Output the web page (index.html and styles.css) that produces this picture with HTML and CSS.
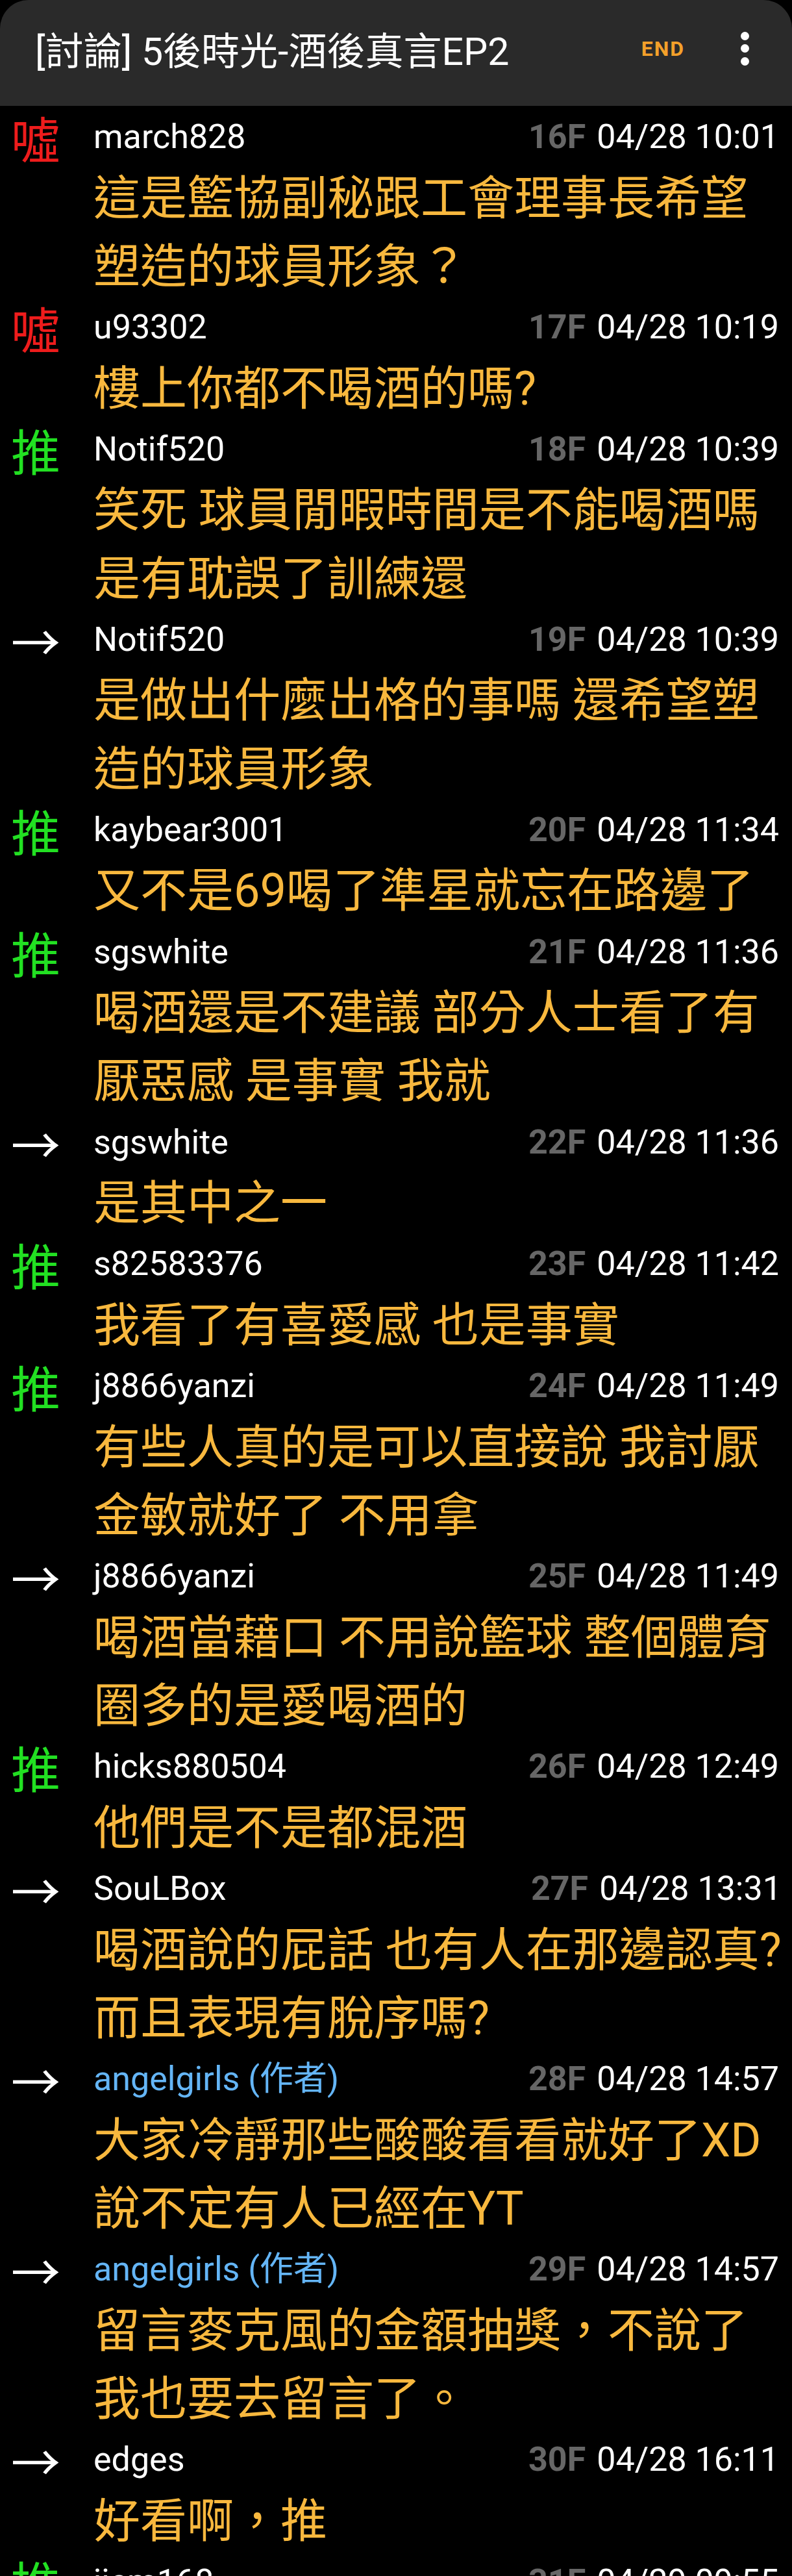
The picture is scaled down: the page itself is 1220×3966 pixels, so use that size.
FILE: index.html
```html
<!DOCTYPE html>
<html lang="zh-Hant">
<head>
<meta charset="utf-8">
<title>[討論] 5後時光-酒後真言EP2</title>
<link rel="stylesheet" href="styles.css">
</head>
<body>
<div class="screen">
  <header class="appbar">
    <div class="title">[討論] 5後時光-酒後真言EP2</div>
    <div class="end">END</div>
    <div class="more" aria-label="more">
      <span class="dot"></span><span class="dot"></span><span class="dot"></span>
    </div>
  </header>

  <main class="list">
    <div class="row">
      <div class="tag boo">噓</div>
      <div class="body">
        <div class="meta"><span class="user">march828</span><span class="floor">16F</span><span class="date">04/28 10:01</span></div>
        <div class="content">這是籃協副秘跟工會理事長希望<br>塑造的球員形象？</div>
      </div>
    </div>
    <div class="row">
      <div class="tag boo">噓</div>
      <div class="body">
        <div class="meta"><span class="user">u93302</span><span class="floor">17F</span><span class="date">04/28 10:19</span></div>
        <div class="content">樓上你都不喝酒的嗎?</div>
      </div>
    </div>
    <div class="row">
      <div class="tag push">推</div>
      <div class="body">
        <div class="meta"><span class="user">Notif520</span><span class="floor">18F</span><span class="date">04/28 10:39</span></div>
        <div class="content">笑死 球員閒暇時間是不能喝酒嗎<br>是有耽誤了訓練還</div>
      </div>
    </div>
    <div class="row">
      <div class="tag arrow">→</div>
      <div class="body">
        <div class="meta"><span class="user">Notif520</span><span class="floor">19F</span><span class="date">04/28 10:39</span></div>
        <div class="content">是做出什麼出格的事嗎 還希望塑<br>造的球員形象</div>
      </div>
    </div>
    <div class="row">
      <div class="tag push">推</div>
      <div class="body">
        <div class="meta"><span class="user">kaybear3001</span><span class="floor">20F</span><span class="date">04/28 11:34</span></div>
        <div class="content">又不是69喝了準星就忘在路邊了</div>
      </div>
    </div>
    <div class="row">
      <div class="tag push">推</div>
      <div class="body">
        <div class="meta"><span class="user">sgswhite</span><span class="floor">21F</span><span class="date">04/28 11:36</span></div>
        <div class="content">喝酒還是不建議 部分人士看了有<br>厭惡感 是事實 我就</div>
      </div>
    </div>
    <div class="row">
      <div class="tag arrow">→</div>
      <div class="body">
        <div class="meta"><span class="user">sgswhite</span><span class="floor">22F</span><span class="date">04/28 11:36</span></div>
        <div class="content">是其中之一</div>
      </div>
    </div>
    <div class="row">
      <div class="tag push">推</div>
      <div class="body">
        <div class="meta"><span class="user">s82583376</span><span class="floor">23F</span><span class="date">04/28 11:42</span></div>
        <div class="content">我看了有喜愛感 也是事實</div>
      </div>
    </div>
    <div class="row">
      <div class="tag push">推</div>
      <div class="body">
        <div class="meta"><span class="user">j8866yanzi</span><span class="floor">24F</span><span class="date">04/28 11:49</span></div>
        <div class="content">有些人真的是可以直接說 我討厭<br>金敏就好了 不用拿</div>
      </div>
    </div>
    <div class="row">
      <div class="tag arrow">→</div>
      <div class="body">
        <div class="meta"><span class="user">j8866yanzi</span><span class="floor">25F</span><span class="date">04/28 11:49</span></div>
        <div class="content">喝酒當藉口 不用說籃球 整個體育<br>圈多的是愛喝酒的</div>
      </div>
    </div>
    <div class="row">
      <div class="tag push">推</div>
      <div class="body">
        <div class="meta"><span class="user">hicks880504</span><span class="floor">26F</span><span class="date">04/28 12:49</span></div>
        <div class="content">他們是不是都混酒</div>
      </div>
    </div>
    <div class="row">
      <div class="tag arrow">→</div>
      <div class="body">
        <div class="meta"><span class="user">SouLBox</span><span class="floor">27F</span><span class="date">04/28 13:31</span></div>
        <div class="content">喝酒說的屁話 也有人在那邊認真?<br>而且表現有脫序嗎?</div>
      </div>
    </div>
    <div class="row">
      <div class="tag arrow">→</div>
      <div class="body">
        <div class="meta"><span class="user author">angelgirls (作者)</span><span class="floor">28F</span><span class="date">04/28 14:57</span></div>
        <div class="content">大家冷靜那些酸酸看看就好了XD<br>說不定有人已經在YT</div>
      </div>
    </div>
    <div class="row">
      <div class="tag arrow">→</div>
      <div class="body">
        <div class="meta"><span class="user author">angelgirls (作者)</span><span class="floor">29F</span><span class="date">04/28 14:57</span></div>
        <div class="content">留言麥克風的金額抽獎，不說了<br>我也要去留言了。</div>
      </div>
    </div>
    <div class="row">
      <div class="tag arrow">→</div>
      <div class="body">
        <div class="meta"><span class="user">edges</span><span class="floor">30F</span><span class="date">04/28 16:11</span></div>
        <div class="content">好看啊，推</div>
      </div>
    </div>
    <div class="row">
      <div class="tag push">推</div>
      <div class="body">
        <div class="meta"><span class="user">jjcm168</span><span class="floor">31F</span><span class="date">04/29 09:55</span></div>
        <div class="content">&nbsp;</div>
      </div>
    </div>
  </main>
</div>
</body>
</html>
```

FILE: styles.css
```css
html, body {
  margin: 0;
  padding: 0;
  background: #000;
}

body {
  font-family: Roboto, "Noto Sans CJK TC", sans-serif;
  color: #fff;
  overflow: hidden;
}

.screen {
  width: 1220px;
  height: 3966px;
  overflow: hidden;
  background: #000;
}

.appbar {
  height: 163px;
  box-sizing: border-box;
  background: #2a2a2a;
  border-radius: 44px 44px 0 0;
  display: flex;
  align-items: center;
  padding: 0 0 14px 54px;
}

.title {
  flex: 1;
  font-size: 59px;
  color: #fff;
  white-space: nowrap;
}

.end {
  font-family: Roboto, sans-serif;
  font-weight: 700;
  font-size: 32px;
  letter-spacing: 2px;
  color: #f3a02a;
  margin-right: 86px;
}

.more {
  display: flex;
  flex-direction: column;
  align-items: center;
  gap: 6.5px;
  margin-right: 66px;
}

.dot {
  width: 13px;
  height: 13px;
  border-radius: 50%;
  background: #fff;
}

.list {
  padding-top: 7px;
}

.row {
  display: grid;
  grid-template-columns: 127px 1fr;
  padding: 0 20px 0 17px;
}

.tag {
  font-family: "Noto Sans CJK TC", sans-serif;
  font-size: 76px;
  line-height: 82.6px;
}

.tag.boo { color: #ee1c1c; }
.tag.push { color: #22e022; }
.tag.arrow { color: #fff; }

.meta {
  display: flex;
  align-items: baseline;
  font-size: 52px;
  line-height: 82.6px;
  white-space: nowrap;
}

.user {
  flex: 1;
  color: #fff;
}

.user.author {
  color: #64b5f6;
}

.floor {
  font-weight: 700;
  color: #666;
}

.date {
  margin-left: 17px;
  color: #fff;
}

.content {
  font-size: 72px;
  line-height: 105.2px;
  color: #f8b83e;
  white-space: nowrap;
}
```
